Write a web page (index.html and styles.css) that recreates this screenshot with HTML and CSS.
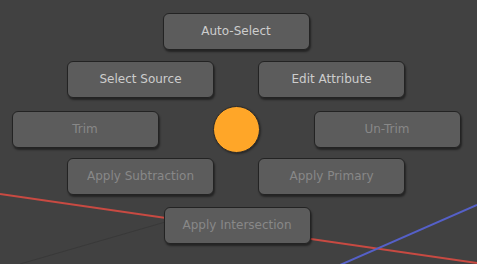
FILE: index.html
```html
<!DOCTYPE html>
<html lang="en">

<head>
    <meta charset="UTF-8">
    <meta name="viewport" content="width=device-width, initial-scale=1.0">
    <title>Pie Menu</title>
    <link rel="stylesheet" href="styles.css">
</head>

<body>
    <div id="viewport">
        <!-- grid axes behind the pie -->
        <svg class="axes" width="477" height="264" viewBox="0 0 477 264">
            <line x1="20" y1="264" x2="200" y2="212" stroke="#393939" stroke-width="1" />
            <line x1="0" y1="194" x2="477" y2="263" stroke="#c84a42" stroke-width="2" />
            <line x1="340" y1="265" x2="477" y2="205" stroke="#5560c8" stroke-width="2" />
        </svg>

        <div class="pie">
            <div class="row row-top">
                <button class="pie-btn">Auto-Select</button>
            </div>
            <div class="row row-2">
                <button class="pie-btn">Select Source</button>
                <button class="pie-btn">Edit Attribute</button>
            </div>
            <div class="row row-3">
                <button class="pie-btn disabled">Trim</button>
                <div class="pie-center"></div>
                <button class="pie-btn disabled">Un-Trim</button>
            </div>
            <div class="row row-4">
                <button class="pie-btn disabled">Apply Subtraction</button>
                <button class="pie-btn disabled">Apply Primary</button>
            </div>
            <div class="row row-bottom">
                <button class="pie-btn disabled">Apply Intersection</button>
            </div>
        </div>
    </div>
</body>

</html>
```

FILE: styles.css
```css
*,
*:before,
*:after {
    box-sizing: border-box;
}

html,
body {
    margin: 0;
    height: 100%;
}

body {
    background-color: #414141;
    font-family: "DejaVu Sans", "Liberation Sans", sans-serif;
}

#viewport {
    position: relative;
    width: 477px;
    height: 264px;
    overflow: hidden;
}

.axes {
    position: absolute;
    left: 0;
    top: 0;
    z-index: 0;
}

.pie {
    position: relative;
    z-index: 1;
    display: flex;
    flex-direction: column;
    padding-top: 13px;
    padding-right: 5px;
}

.row {
    display: flex;
    justify-content: center;
    align-items: center;
    height: 36px;
}

.row-2 {
    margin-top: 12px;
    gap: 44px;
}

.row-3 {
    margin-top: 14px;
    gap: 54px;
}

.row-4 {
    margin-top: 11px;
    gap: 44px;
}

.row-bottom {
    margin-top: 13px;
    padding-left: 2px;
}

.pie-btn {
    width: 147px;
    height: 37px;
    border: 1px solid #232323;
    border-radius: 6px;
    background-color: #5c5c5c;
    box-shadow: 1px 2px 2px rgba(0, 0, 0, 0.45);
    color: #cdcdcd;
    font-family: inherit;
    font-size: 12px;
    padding: 0;
}

.pie-btn.disabled {
    color: #888888;
}

.pie-center {
    width: 47px;
    height: 47px;
    border-radius: 50%;
    background-color: #ffa628;
    border: 1px solid #2a2a2a;
    box-shadow: 1px 1px 2px rgba(0, 0, 0, 0.4);
    flex-shrink: 0;
}
```
